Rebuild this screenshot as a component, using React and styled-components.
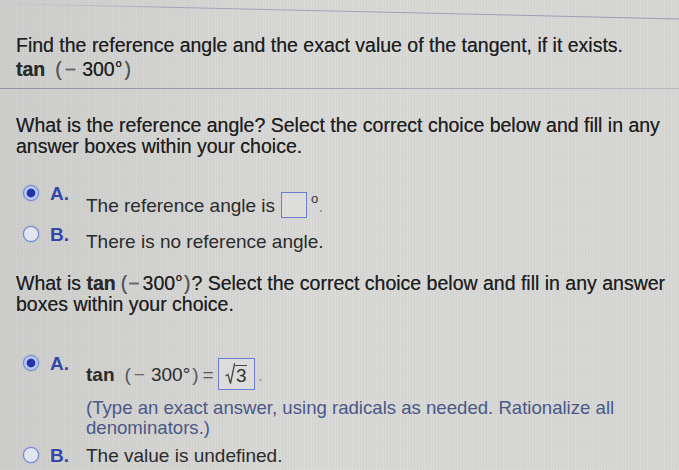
import React from "react";
import styled, { createGlobalStyle } from "styled-components";

const GlobalStyle = createGlobalStyle`
  html, body {
    margin: 0;
    padding: 0;
  }
  body {
    background: #d4d4d2;
    font-family: "Liberation Sans", Arial, sans-serif;
    color: #232323;
  }
`;

const Page = styled.div`
  width: 679px;
  height: 470px;
  overflow: hidden;
  box-sizing: border-box;
  padding-top: 3px;
  background:
    repeating-linear-gradient(0deg, rgba(255, 255, 255, 0.05) 0 1px, transparent 1px 3px),
    repeating-linear-gradient(90deg, rgba(0, 0, 0, 0.025) 0 1px, transparent 1px 3px),
    linear-gradient(90deg, #cdcecc 0%, #d8d8d6 45%, #d6d6d4 100%);
`;

const TopRule = styled.div`
  height: 1px;
  width: 700px;
  background: linear-gradient(90deg, rgba(160, 160, 185, 0) 0%, #a3a3bb 25%, #9a9ab6 100%);
  transform: rotate(1.3deg);
  transform-origin: left center;
`;

const Divider = styled.div`
  height: 1px;
  margin-top: 8px;
  background: linear-gradient(90deg, #8e94a6 0%, #9aa0ae 40%, #b8bbc2 100%);
`;

const Prompt = styled.p`
  margin: ${(p) => p.$top || 0}px 0 0;
  padding: 0 8px 0 16px;
  font-size: 19.5px;
  line-height: 21px;
  color: #1f1f1f;
  text-shadow: 0 0 0.5px rgba(0, 0, 0, 0.6);
`;

const Expr = styled.span`
  white-space: nowrap;
`;

const Fn = styled.span`
  font-weight: bold;
  color: #2a2a2a;
  margin-right: ${(p) => p.$gap}px;
`;

const Paren = styled.span`
  color: #555;
  font-weight: normal;
  margin: 0 ${(p) => p.$gap || 0}px;
`;

const Minus = styled.span`
  color: #666;
  margin-right: ${(p) => p.$gap}px;
`;

const Section = styled.section`
  margin-top: ${(p) => p.$top || 0}px;
`;

const Choice = styled.div`
  display: flex;
  align-items: flex-start;
  padding-left: 23px;
  margin-top: ${(p) => p.$top || 0}px;
`;

const Radio = styled.span`
  flex: none;
  width: 16px;
  height: 16px;
  margin-top: 2px;
  box-sizing: border-box;
  border-radius: 50%;
  border: 1.5px solid #6a86d6;
  background: ${(p) =>
    p.$on
      ? "radial-gradient(circle, #2234a8 0 3.8px, #b9c7f0 4.8px)"
      : "#e2e5ee"};
  box-shadow: 0 0 1.5px rgba(60, 90, 200, 0.55);
`;

const Letter = styled.span`
  flex: none;
  width: 36px;
  margin-left: 11px;
  font-size: 19px;
  line-height: 21px;
  font-weight: bold;
  color: #3247a8;
`;

const Body = styled.div`
  margin-top: ${(p) => p.$drop || 0}px;
  font-size: 19px;
  line-height: 21px;
  color: #2b2b2b;
`;

const AnswerLine = styled.div`
  display: flex;
  align-items: center;
  height: ${(p) => p.$h}px;
  white-space: nowrap;
`;

const AnswerBox = styled.span`
  display: inline-flex;
  align-items: center;
  justify-content: center;
  box-sizing: border-box;
  width: ${(p) => p.$w}px;
  height: ${(p) => p.$h}px;
  margin-left: ${(p) => p.$left || 0}px;
  border: 1px solid #6c7fcf;
  background: rgba(236, 236, 236, 0.35);
`;

const DegMark = styled.span`
  align-self: flex-start;
  font-size: 13px;
  line-height: 13px;
  margin: 1px 0 0 4px;
  color: #333;
`;

const Dot = styled.span`
  color: #999;
  margin-left: ${(p) => p.$left || 0}px;
`;

const Equals = styled.span`
  color: #555;
  margin-left: 2px;
`;

const Hint = styled.p`
  margin: 8px 0 0;
  font-size: 18.6px;
  line-height: 20px;
  color: #4a5886;
  width: 545px;
`;

const Radical = styled.span`
  display: inline-flex;
  align-items: flex-end;
  height: 22px;
  color: #333;
`;

const Radicand = styled.span`
  border-top: 1.3px solid #444;
  line-height: 19px;
  padding: 0 1px;
`;

const Tan = ({ tight }) => (
  <Expr>
    <Fn $gap={tight ? 4 : 7}>tan</Fn>
    <Paren $gap={tight ? 1 : 3}>(</Paren>
    <Minus $gap={tight ? 3 : 6}>−</Minus>
    300°
    <Paren $gap={tight ? 1 : 2}>)</Paren>
  </Expr>
);

const Sqrt3 = () => (
  <Radical>
    <svg width="10" height="22" viewBox="0 0 10 22">
      <path d="M0.5 13 L3 11.5 L5.5 20.5 L9.6 0.7 L10 0.7" fill="none" stroke="#444" strokeWidth="1.3" />
    </svg>
    <Radicand>3</Radicand>
  </Radical>
);

const App = () => {
  return (
    <Page>
      <GlobalStyle />
      <TopRule />
      <Prompt $top={31}>
        Find the reference angle and the exact value of the tangent, if it exists.
      </Prompt>
      <Prompt $top={3}>
        <Tan />
      </Prompt>
      <Divider />

      <Section $top={26}>
        <Prompt>
          What is the reference angle? Select the correct choice below and fill in any answer
          boxes within your choice.
        </Prompt>
        <Choice $top={26}>
          <Radio $on />
          <Letter>A.</Letter>
          <Body $drop={8}>
            <AnswerLine $h={28}>
              The reference angle is
              <AnswerBox $w={26} $h={26} $left={6} />
              <DegMark>o</DegMark>
              <Dot>.</Dot>
            </AnswerLine>
          </Body>
        </Choice>
        <Choice $top={5}>
          <Radio />
          <Letter>B.</Letter>
          <Body $drop={7}>There is no reference angle.</Body>
        </Choice>
      </Section>

      <Section $top={21}>
        <Prompt>
          What is <Tan tight />? Select the correct choice below and fill in any answer boxes
          within your choice.
        </Prompt>
        <Choice $top={38}>
          <Radio $on />
          <Letter>A.</Letter>
          <Body $drop={5}>
            <AnswerLine $h={32}>
              <Tan />
              <Equals>=</Equals>
              <AnswerBox $w={37} $h={32} $left={4}>
                <Sqrt3 />
              </AnswerBox>
              <Dot $left={3}>.</Dot>
            </AnswerLine>
            <Hint>
              (Type an exact answer, using radicals as needed. Rationalize all denominators.)
            </Hint>
          </Body>
        </Choice>
        <Choice $top={7}>
          <Radio />
          <Letter>B.</Letter>
          <Body>The value is undefined.</Body>
        </Choice>
      </Section>
    </Page>
  );
};

export default App;
